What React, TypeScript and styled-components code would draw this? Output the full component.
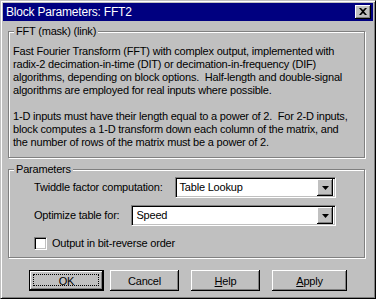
import React from 'react';
import styled, { createGlobalStyle } from 'styled-components';

const Global = createGlobalStyle`
  html, body { margin: 0; padding: 0; background: #c0c0c0; }
  body { font-family: "Liberation Sans", Arial, sans-serif; }
  * { box-sizing: border-box; }
`;

const Window = styled.div`
  width: 376px;
  height: 299px;
  background: #c0c0c0;
  border: 1px solid;
  border-color: #c0c0c0 #000 #000 #c0c0c0;
  box-shadow: inset 1px 1px #fff, inset -1px -1px #808080;
  padding: 2px;
  display: flex;
  flex-direction: column;
  font-size: 11px;
  letter-spacing: -0.2px;
  color: #000;
`;

const TitleBar = styled.div`
  height: 18px;
  background: #000080;
  color: #fff;
  display: flex;
  align-items: center;
  justify-content: space-between;
  padding: 0 2px 0 3px;
  font-size: 12px;
`;

const CloseButton = styled.div`
  width: 16px;
  height: 14px;
  background: #c0c0c0;
  box-shadow: inset -1px -1px #000, inset 1px 1px #fff, inset -2px -2px #808080;
  display: flex;
  align-items: center;
  justify-content: center;
  padding-bottom: 1px;
`;

const Body = styled.div`
  flex: 1;
  display: flex;
  flex-direction: column;
  padding: 10px 5px 0 5px;
`;

const GroupBox = styled.div<{ $h: number; $mt?: number }>`
  position: relative;
  width: 357px;
  height: ${(p) => p.$h}px;
  margin-top: ${(p) => p.$mt ?? 0}px;
  border: 1px solid #808080;
  box-shadow: inset 1px 1px #fff, 1px 1px #fff;
`;

const Legend = styled.span`
  position: absolute;
  top: -7px;
  left: 5px;
  padding: 0 2px;
  background: #c0c0c0;
  line-height: 13px;
`;

const Description = styled.div`
  padding: 13px 4px 0 4px;
  line-height: 13px;
  white-space: nowrap;
  & p { margin: 0 0 13px 0; }
`;

const Params = styled.div`
  display: flex;
  flex-direction: column;
  padding: 7px 28px 0 25px;
`;

const Row = styled.div<{ $mt?: number }>`
  display: flex;
  align-items: center;
  gap: 12px;
  margin-top: ${(p) => p.$mt ?? 0}px;
  line-height: 13px;
`;

const Combo = styled.div`
  flex: 1;
  height: 21px;
  background: #fff;
  border: 1px solid;
  border-color: #808080 #fff #fff #808080;
  box-shadow: inset 1px 1px #000, inset -1px -1px #c0c0c0;
  display: flex;
  align-items: center;
  justify-content: space-between;
  padding: 2px 2px 2px 4px;
`;

const DropButton = styled.div`
  width: 16px;
  height: 17px;
  background: #c0c0c0;
  box-shadow: inset -1px -1px #000, inset 1px 1px #fff, inset -2px -2px #808080;
  display: flex;
  align-items: center;
  justify-content: center;
`;

const CheckRow = styled.label`
  display: flex;
  align-items: center;
  gap: 5px;
  margin-top: 11px;
  line-height: 13px;
`;

const CheckBox = styled.span`
  width: 13px;
  height: 13px;
  background: #fff;
  border: 1px solid;
  border-color: #808080 #fff #fff #808080;
  box-shadow: inset 1px 1px #000, inset -1px -1px #c0c0c0;
`;

const ButtonRow = styled.div`
  display: flex;
  margin-top: 12px;
  padding-left: 21px;
`;

const Button = styled.div<{ $default?: boolean; $w: number; $ml?: number }>`
  width: ${(p) => p.$w}px;
  height: 21px;
  margin-left: ${(p) => p.$ml ?? 0}px;
  background: #c0c0c0;
  display: flex;
  align-items: center;
  justify-content: center;
  position: relative;
  box-shadow: inset -1px -1px #000, inset 1px 1px #fff, inset -2px -2px #808080;
  ${(p) => (p.$default ? `border: 1px solid #000;` : ``)}
`;

const Focus = styled.span`
  position: absolute;
  left: 3px;
  top: 3px;
  right: 4px;
  bottom: 4px;
  border: 1px dotted #000;
`;

const Arrow = () => (
  <svg width="7" height="4" viewBox="0 0 7 4">
    <path d="M0 0h7L3.5 4z" fill="#000" />
  </svg>
);

export default function App() {
  return (
    <>
      <Global />
      <Window>
        <TitleBar>
          <span>Block Parameters: FFT2</span>
          <CloseButton>
            <svg width="8" height="7" viewBox="0 0 8 7">
              <path d="M0 0h2l2 2 2-2h2L5 3.5 8 7H6L4 5 2 7H0l3-3.5z" fill="#000" />
            </svg>
          </CloseButton>
        </TitleBar>
        <Body>
          <GroupBox $h={127}>
            <Legend>FFT (mask) (link)</Legend>
            <Description>
              <p>
                Fast Fourier Transform (FFT) with complex output, implemented with<br />
                radix-2 decimation-in-time (DIT) or decimation-in-frequency (DIF)<br />
                algorithms, depending on block options.&nbsp; Half-length and double-signal<br />
                algorithms are employed for real inputs where possible.
              </p>
              <p>
                1-D inputs must have their length equal to a power of 2.&nbsp; For 2-D inputs,<br />
                block computes a 1-D transform down each column of the matrix, and<br />
                the number of rows of the matrix must be a power of 2.
              </p>
            </Description>
          </GroupBox>
          <GroupBox $h={89} $mt={11}>
            <Legend>Parameters</Legend>
            <Params>
              <Row>
                <span>Twiddle factor computation:</span>
                <Combo>
                  <span>Table Lookup</span>
                  <DropButton><Arrow /></DropButton>
                </Combo>
              </Row>
              <Row $mt={7}>
                <span>Optimize table for:</span>
                <Combo>
                  <span>Speed</span>
                  <DropButton><Arrow /></DropButton>
                </Combo>
              </Row>
              <CheckRow>
                <CheckBox />
                <span>Output in bit-reverse order</span>
              </CheckRow>
            </Params>
          </GroupBox>
          <ButtonRow>
            <Button $default $w={75}>
              <Focus />
              OK
            </Button>
            <Button $w={69} $ml={6}>Cancel</Button>
            <Button $w={69} $ml={12}><span><u>H</u>elp</span></Button>
            <Button $w={75} $ml={12}><span><u>A</u>pply</span></Button>
          </ButtonRow>
        </Body>
      </Window>
    </>
  );
}
